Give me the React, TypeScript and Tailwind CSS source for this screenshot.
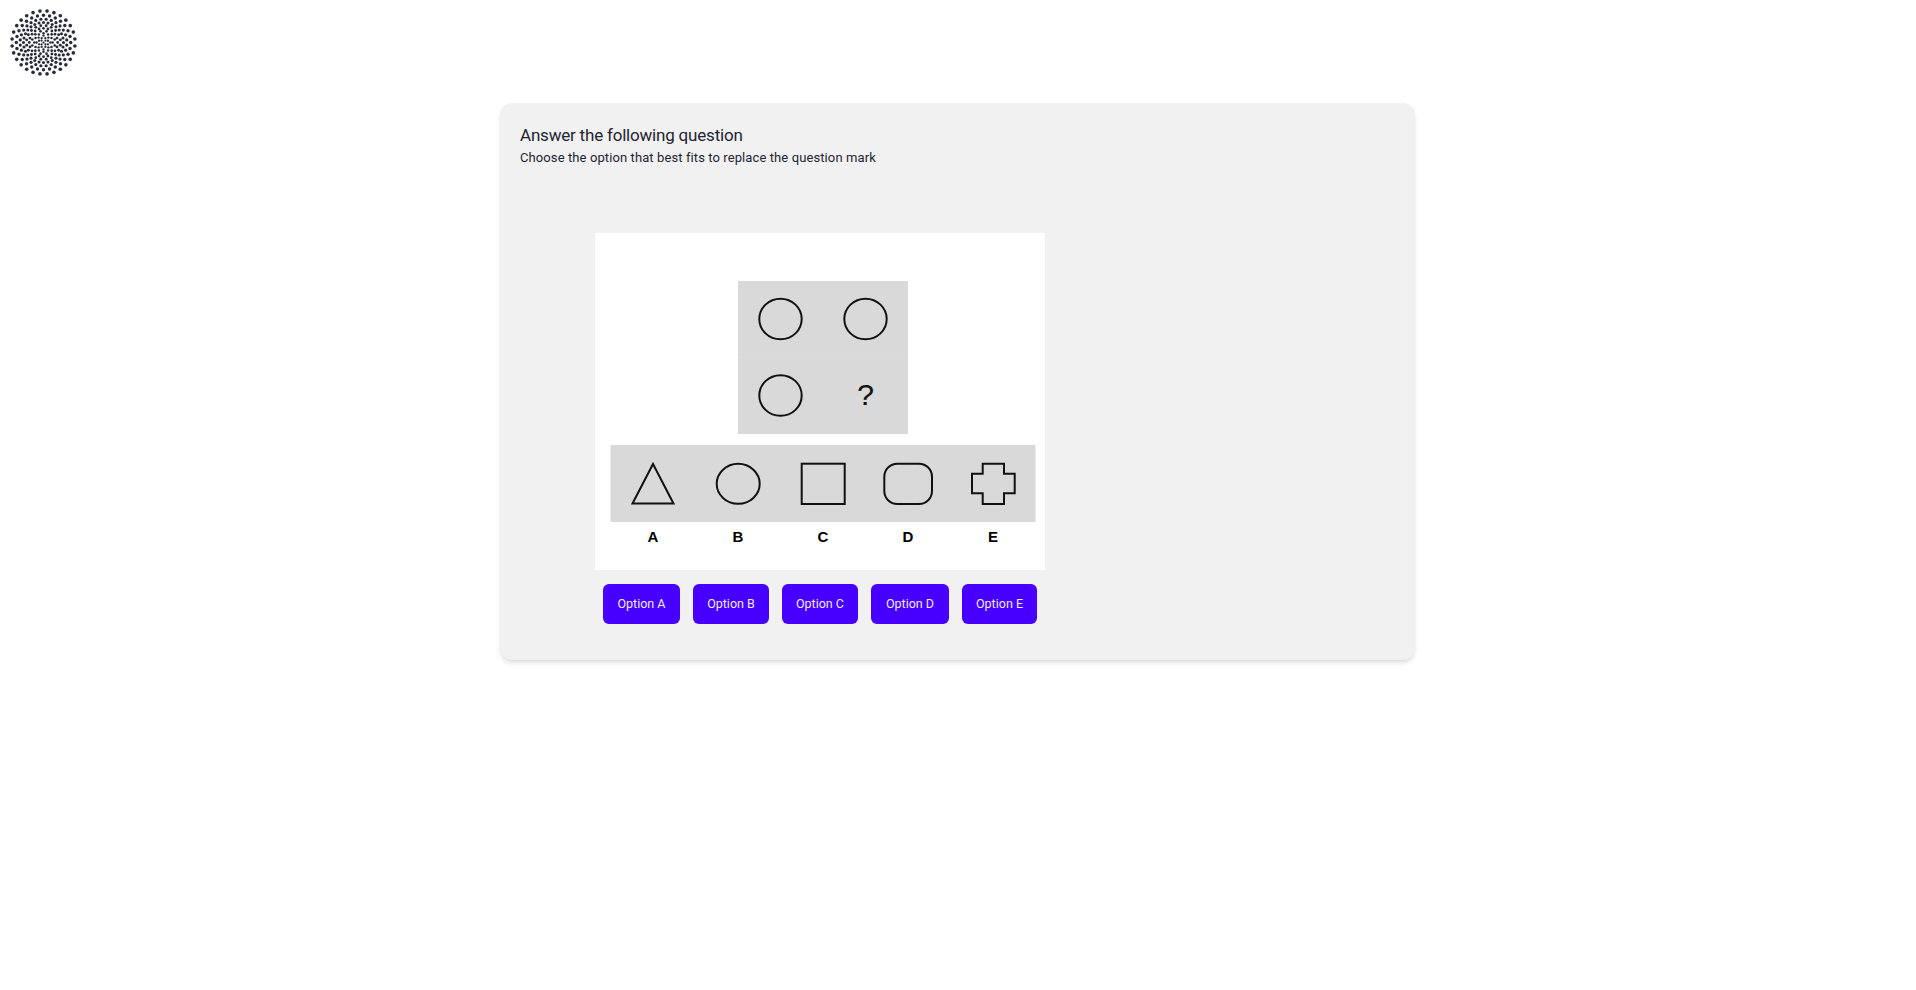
// logo: staggered rings of dots, tighter towards the middle
const logoRings = [
  { r: 31.6, n: 28 },
  { r: 27.2, n: 28 },
  { r: 23.4, n: 28 },
  { r: 20, n: 28 },
  { r: 17, n: 20 },
  { r: 14.2, n: 20 },
  { r: 11.6, n: 12 },
  { r: 9.2, n: 12 },
  { r: 6.9, n: 8 },
  { r: 4.8, n: 8 },
  { r: 2.7, n: 4 },
];

const logoDots = logoRings.flatMap((ring, k) =>
  Array.from({ length: ring.n }, (_, i) => {
    const a = ((i + (k % 2) * 0.5) * 2 * Math.PI) / ring.n + Math.PI / 4;
    return {
      x: 43.5 + ring.r * Math.cos(a),
      y: 42.5 + ring.r * Math.sin(a),
      s: 1.05 + (ring.r / 33) * 0.8,
    };
  })
);

function Logo() {
  return (
    <svg width="86" height="86" viewBox="0 0 86 86" className="block">
      {logoDots.map((d, i) => (
        <circle key={i} cx={d.x} cy={d.y} r={d.s} fill="#2a2b38" />
      ))}
      <circle cx="43.5" cy="42.5" r="1.05" fill="#2a2b38" />
    </svg>
  );
}

function Puzzle() {
  const stroke = { fill: "none", stroke: "#111", strokeWidth: 2 };
  const labels = [
    { t: "A", x: 58 },
    { t: "B", x: 143 },
    { t: "C", x: 228 },
    { t: "D", x: 313 },
    { t: "E", x: 398 },
  ];
  return (
    <svg width="450" height="337" viewBox="0 0 450 337" className="block">
      <rect x="143" y="48" width="170" height="153" fill="#d9d9d9" />
      <rect x="143" y="124" width="170" height="1" fill="#dbdbdb" />
      <ellipse cx="185.5" cy="86" rx="21.2" ry="20.3" {...stroke} />
      <ellipse cx="270.5" cy="86" rx="21.2" ry="20.3" {...stroke} />
      <ellipse cx="185.5" cy="162.5" rx="21.2" ry="20.3" {...stroke} />
      <text x="270.5" y="172" textAnchor="middle" fontSize="30" fontFamily="Liberation Sans" fill="#111" stroke="#111" strokeWidth="0.2">?</text>
      <rect x="15.5" y="212" width="425" height="77" fill="#d9d9d9" />
      <path d="M58 231 L37.5 270.5 H78.5 Z" {...stroke} />
      <ellipse cx="143.2" cy="250.8" rx="21.5" ry="20" {...stroke} />
      <rect x="206.7" y="230.7" width="43" height="40.3" {...stroke} />
      <rect x="289.3" y="230.7" width="47.7" height="40.3" rx="13" {...stroke} />
      <path d="M387.7 230.7 H409 V240.7 H419.7 V260.3 H409 V271 H387.7 V260.3 H377 V240.7 H387.7 Z" {...stroke} />
      {labels.map((l) => (
        <text key={l.t} x={l.x} y="309" textAnchor="middle" fontSize="15" fontWeight="700" fontFamily="Liberation Sans" fill="#000">
          {l.t}
        </text>
      ))}
    </svg>
  );
}

export default function App() {
  const options = [
    { label: "Option A", w: "w-[77px]" },
    { label: "Option B", w: "w-[76px]" },
    { label: "Option C", w: "w-[76px]" },
    { label: "Option D", w: "w-[78px]" },
    { label: "Option E", w: "w-[75px]" },
  ];
  return (
    <div className="min-h-[990px] bg-white font-['Roboto',sans-serif] text-[#1f2433]">
      <div className="h-[103px]">
        <Logo />
      </div>
      <div className="w-[915px] ml-[500px] h-[557px] bg-[#f1f1f1] rounded-xl shadow-md pt-5 px-5">
        <h1 className="text-[17px] leading-[24px] tracking-[-0.2px]">Answer the following question</h1>
        <p className="text-[13px] leading-[21px] tracking-[0.1px]">Choose the option that best fits to replace the question mark</p>
        <div className="ml-[75px] mt-[65px] w-[450px]">
          <div className="bg-white">
            <Puzzle />
          </div>
          <div className="flex gap-[13px] mt-[14px] ml-[8px]">
            {options.map((o) => (
              <button key={o.label} className={`${o.w} h-10 bg-[#4700ff] text-[#f0eaff] text-[12.5px] rounded-md`}>
                {o.label}
              </button>
            ))}
          </div>
        </div>
      </div>
    </div>
  );
}
